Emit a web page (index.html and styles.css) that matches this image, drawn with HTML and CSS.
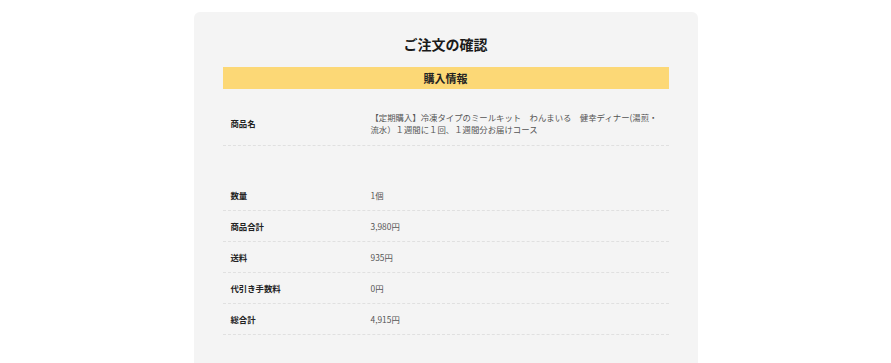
FILE: index.html
```html
<!DOCTYPE html>
<html lang="ja">
<head>
<meta charset="utf-8">
<title>ご注文の確認</title>
<link rel="stylesheet" href="styles.css">
</head>
<body>
<div class="page">
  <section class="card">
    <h1 class="title">ご注文の確認</h1>
    <h2 class="band">購入情報</h2>
    <div class="rows">
      <div class="row row-first">
        <div class="label">商品名</div>
        <div class="value">【定期購入】冷凍タイプのミールキット　わんまいる　健幸ディナー(湯煎・流水）１週間に１回、１週間分お届けコース</div>
      </div>
      <div class="spacer"></div>
      <div class="row">
        <div class="label">数量</div>
        <div class="value">1個</div>
      </div>
      <div class="row">
        <div class="label">商品合計</div>
        <div class="value">3,980円</div>
      </div>
      <div class="row">
        <div class="label">送料</div>
        <div class="value">935円</div>
      </div>
      <div class="row">
        <div class="label">代引き手数料</div>
        <div class="value">0円</div>
      </div>
      <div class="row">
        <div class="label">総合計</div>
        <div class="value">4,915円</div>
      </div>
    </div>
  </section>
</div>
</body>
</html>
```
FILE: styles.css
```css
html, body {
  margin: 0;
  padding: 0;
  background: #ffffff;
}
body {
  font-family: "Noto Sans CJK JP", "Noto Sans", sans-serif;
  color: #333;
}
.page {
  padding-top: 12px;
}
.card {
  width: 446px;
  margin: 0 auto;
  background: #f4f4f4;
  border-radius: 6px;
  padding: 22px 29px 60px;
}
.title {
  margin: 0 0 13px;
  font-size: 14px;
  line-height: 20px;
  font-weight: 700;
  text-align: center;
  color: #1a1a1a;
}
.band {
  margin: 0;
  height: 22px;
  line-height: 22px;
  background: #fcd876;
  font-size: 11px;
  font-weight: 700;
  text-align: center;
  color: #222;
}
.rows {
  margin-top: 12px;
}
.row {
  display: flex;
  align-items: center;
  padding: 9px 0;
  border-bottom: 1px dashed #e0e0e0;
  font-size: 8.4px;
  line-height: 12px;
}
.row-first {
  padding-top: 10px;
  padding-bottom: 10px;
}
.spacer {
  height: 34px;
}
.label {
  width: 148px;
  flex: none;
  padding-left: 8px;
  box-sizing: border-box;
  font-weight: 700;
  color: #222;
}
.value {
  flex: 1;
  padding-right: 6px;
  color: #555;
}
```
